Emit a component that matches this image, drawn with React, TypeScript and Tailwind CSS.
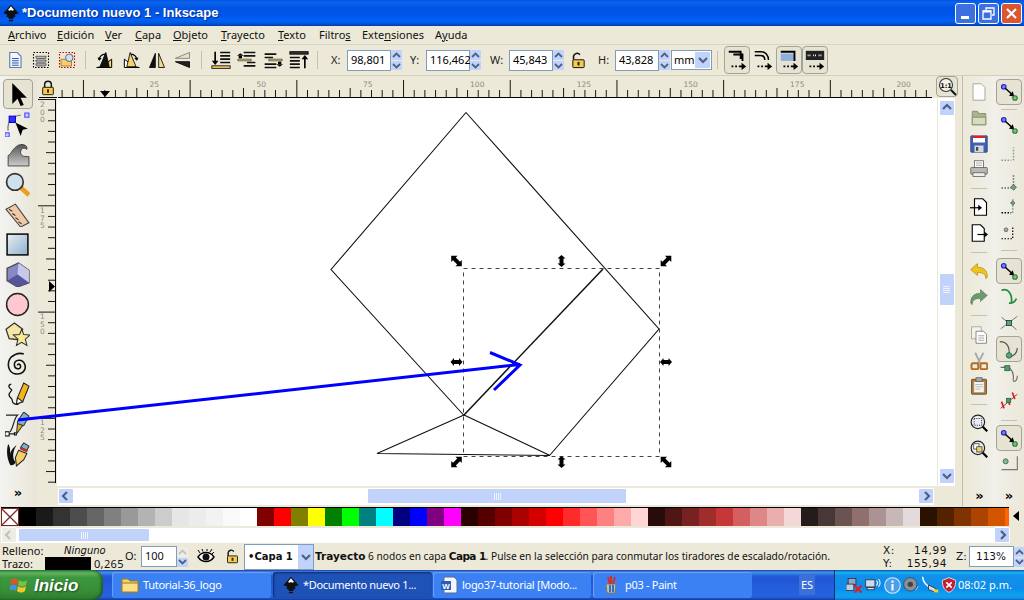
import React from 'react';

const PALETTE = [
  '#000000', '#1a1a1a', '#333333', '#4d4d4d', '#666666', '#808080', '#999999', '#b3b3b3', '#cccccc', '#e6e6e6',
  '#ececec', '#f2f2f2', '#f9f9f9', '#ffffff', '#800000', '#ff0000', '#808000', '#ffff00', '#008000', '#00ff00',
  '#008080', '#00ffff', '#000080', '#0000ff', '#800080', '#ff00ff', '#2b0000', '#550000', '#800000', '#aa0000',
  '#d40000', '#ff0000', '#ff2a2a', '#ff5555', '#ff8080', '#ffaaaa', '#ffd5d5', '#280b0b', '#501616', '#782121',
  '#a02c2c', '#c83737', '#d35f5f', '#de8787', '#e9afaf', '#f4d7d7', '#241c1c', '#483737', '#6c5353', '#916f6f',
  '#ac9393', '#c8b7b7', '#e3dbdb', '#2b1100', '#552200', '#803300', '#aa4400', '#d45500',
];

const MENU: [string, string, string, number][] = [
  ['', 'A', 'rchivo', 49], ['', 'E', 'dición', 48], ['', 'V', 'er', 30], ['', 'C', 'apa', 38], ['', 'O', 'bjeto', 48],
  ['', 'T', 'rayecto', 57], ['', 'T', 'exto', 41], ['Filtro', 's', '', 43], ['Exte', 'n', 'siones', 73], ['A', 'y', 'uda', 40],
];

const Ico = ({ s = 24, children }: { s?: number; children: React.ReactNode }) => (
  <svg width={s} height={s} viewBox="0 0 24 24" className="shrink-0">{children}</svg>
);

const Chevron = ({ dir, c = '#4d6185' }: { dir: 'up' | 'down' | 'left' | 'right'; c?: string }) => {
  const d = { up: 'M3 8l4-4 4 4', down: 'M3 5l4 4 4-4', left: 'M8 3L4 7l4 4', right: 'M6 3l4 4-4 4' }[dir];
  return (
    <svg width="14" height="14" viewBox="0 0 14 14">
      <path d={d} fill="none" stroke={c} strokeWidth="2.2" />
    </svg>
  );
};

const ScrollBtn = ({ dir, off }: { dir: 'up' | 'down' | 'left' | 'right'; off?: boolean }) => (
  <div className={`w-[16px] h-[16px] shrink-0 flex items-center justify-center rounded-[2px] border border-white ${off ? 'bg-[#eeede5]' : 'bg-[#c1d3fb]'}`}>
    <Chevron dir={dir} c={off ? '#c4c3ba' : '#4d6185'} />
  </div>
);

const Grip = ({ v }: { v?: boolean }) => (
  <div className={`flex ${v ? 'flex-col' : ''} gap-[1px]`}>
    {[0, 1, 2, 3].map(i => (
      <div key={i} className={v ? 'w-[7px] h-[1px] bg-[#eef3ff]' : 'w-[1px] h-[7px] bg-[#eef3ff]'} />
    ))}
  </div>
);

const Spin = ({ off }: { off?: boolean }) => (
  <div className="w-[11px] h-[20px] flex flex-col gap-[1px] shrink-0">
    <div className={`h-[10px] flex items-center justify-center rounded-[1px] ${off ? 'bg-[#eeede5]' : 'bg-[#c1d3fb]'}`}>
      <svg width="9" height="6" viewBox="0 0 9 6"><path d="M1 5l3.5-3.5L8 5" fill="none" stroke={off ? '#c4c3ba' : '#4d6185'} strokeWidth="1.8" /></svg>
    </div>
    <div className="h-[9px] flex items-center justify-center rounded-[1px] bg-[#c1d3fb]">
      <svg width="9" height="6" viewBox="0 0 9 6"><path d="M1 1l3.5 3.5L8 1" fill="none" stroke="#4d6185" strokeWidth="1.8" /></svg>
    </div>
  </div>
);

const NumField = ({ label, value, labelW, inputW = 44, gapL = 0 }: { label: string; value: string; labelW: number; inputW?: number; gapL?: number }) => (
  <div className="flex items-center shrink-0" style={{ marginLeft: gapL }}>
    <span className="text-[11px] text-[#222]" style={{ width: labelW }}>{label}</span>
    <div className="h-[21px] border border-[#7f9db9] bg-white flex items-center justify-start pl-[3px] text-[11px] text-black" style={{ width: inputW }}>{value}</div>
    <Spin />
  </div>
);

const Sep = ({ ml, mr }: { ml: number; mr: number }) => (
  <div className="w-[1px] h-[18px] bg-[#c5c2a8] shrink-0" style={{ marginLeft: ml, marginRight: mr }} />
);

const HSep = ({ h = 12 }: { h?: number }) => (
  <div className="flex items-center justify-center shrink-0" style={{ height: h }}><div className="w-[16px] h-[1px] bg-[#c5c2a8]" /></div>
);

const Pressed = ({ w, h, children }: { w: number; h: number; children: React.ReactNode }) => (
  <div className="flex items-center justify-center rounded-[4px] border border-[#a5a397] bg-[#e6e3d3] shrink-0" style={{ width: w, height: h }}>{children}</div>
);

// toolbar icons
const IcoPage = () => (
  <Ico s={18}>
    <path d="M5 2h10l5 5v15H5z" fill="#f4f7ff" stroke="#5d7fb0" strokeWidth="1.5" />
    <path d="M8 10h9M8 13h9M8 16h9M8 19h9" stroke="#2b5da8" strokeWidth="1.6" />
  </Ico>
);
const IcoSelectAll = () => (
  <Ico s={18}>
    <rect x="2" y="2" width="20" height="20" fill="none" stroke="#000" strokeWidth="1.5" strokeDasharray="2 2" />
    <path d="M5 7h14l-1 3H6zM5 12h14l-1 3H6zM5 17h14l-1 3H6z" fill="#bbb" stroke="#444" strokeWidth="1" />
  </Ico>
);
const IcoSelectLayer = () => (
  <Ico s={18}>
    <rect x="2" y="2" width="20" height="20" fill="none" stroke="#c00" strokeWidth="1.5" strokeDasharray="2 2" />
    <path d="M4 11h7l1 2h6v7H4z" fill="#f5cf6a" stroke="#8a6a20" strokeWidth="1" />
    <circle cx="15" cy="9" r="5" fill="#cfe0ef" stroke="#667" strokeWidth="1.3" />
  </Ico>
);
const IcoRot = ({ flip }: { flip?: boolean }) => (
  <Ico s={20}>
    <g transform={flip ? 'translate(24 0) scale(-1 1)' : undefined}>
      <path d="M2 21l6-1 12-9v10H2z" fill={flip ? '#fff' : '#f5d26c'} stroke="#000" strokeWidth="1.2" />
      <path d="M13 3L6 20h11z" fill={flip ? '#f5d26c' : '#111'} stroke="#000" />
      <path d="M5 12a7 7 0 0 1 7-7" fill="none" stroke="#000" strokeWidth="1.6" />
      <path d="M3 9l2 4 3-3z" fill="#000" />
    </g>
  </Ico>
);
const IcoFlipH = () => (
  <Ico s={20}>
    <path d="M10 4L3 21h7z" fill="#111" stroke="#000" />
    <path d="M14 4l7 17h-7z" fill="#f5d98a" stroke="#000" />
  </Ico>
);
const IcoFlipV = () => (
  <Ico s={20}>
    <path d="M21 3L4 10h17z" fill="#e8e3c8" stroke="#777" />
    <path d="M21 14L4 14l17 7z" fill="#222" stroke="#000" />
  </Ico>
);
const IcoOrder = ({ up, ends }: { up?: boolean; ends?: boolean }) => (
  <Ico s={20}>
    <g transform={up ? 'translate(24 24) rotate(180)' : undefined}>
      {ends ? (
        <>
          <path d="M11 3h12M11 7h12M11 11h12M11 15h12" stroke="#111" strokeWidth="2" />
          <path d="M5 2v13" stroke="#000" strokeWidth="2" />
          <path d="M1 13l4 5 4-5z" fill="#000" />
          <rect x="1" y="19" width="22" height="3" fill={up ? '#333' : '#f5cf6a'} stroke="#000" strokeWidth="1" />
        </>
      ) : (
        <>
          <path d="M8 3h14M8 7h14M12 15h10M8 19h14" stroke="#111" strokeWidth="2" />
          <path d="M1 11h16v2H1z" fill="#f5cf6a" stroke="#333" strokeWidth=".8" />
          <path d="M2 7h4v3H2z" fill="#000" />
          <path d="M0 7l4-3 4 3z" fill="#000" />
        </>
      )}
    </g>
  </Ico>
);
const IcoLock = ({ open, s = 16 }: { open?: boolean; s?: number }) => (
  <Ico s={s}>
    <path d={open ? 'M5 11V6a5 5 0 0 1 9-2' : 'M7 11V7a5 5 0 0 1 10 0v4'} fill="none" stroke="#111" strokeWidth="2.2" />
    <rect x="4" y="11" width="16" height="11" rx="1" fill="#f6cb52" stroke="#111" strokeWidth="1.4" />
    <rect x="10.5" y="14" width="3" height="5" fill="#3b2b05" />
  </Ico>
);
const IcoObj = ({ kind }: { kind: 0 | 1 | 2 | 3 }) => (
  <Ico s={22}>
    {kind === 0 && <path d="M3 3h13v3h2v7M8 6h8v5" fill="none" stroke="#000" strokeWidth="2" />}
    {kind === 1 && <path d="M3 3h7c5 0 8 4 8 9M3 7h6c3 0 5 2 5 5" fill="none" stroke="#000" strokeWidth="1.6" />}
    {kind === 2 && (
      <>
        <rect x="3" y="5" width="15" height="8" fill="#8fb0d8" />
        <path d="M3 3h15v10" fill="none" stroke="#000" strokeWidth="2" />
      </>
    )}
    {kind === 3 && (
      <>
        <rect x="2" y="2" width="20" height="10" fill="#222" />
        <path d="M4 7h4M10 7h4M16 7h4" stroke="#fff" strokeWidth="2" strokeDasharray="1 1" />
      </>
    )}
    <path d="M6 19h2M10 19h2M14 19h4" stroke="#000" strokeWidth="1.8" />
    <path d="M17 15l5 4-5 4z" fill="#000" />
  </Ico>
);

// snap
const Snap = ({ s = 18 }: { s?: number }) => (
  <Ico s={s}>
    <circle cx="5" cy="5" r="3" fill="#7a7df0" stroke="#2222cc" strokeWidth="1.6" />
    <path d="M7 7l10 9" stroke="#000" strokeWidth="2" />
    <path d="M17 11l2 7-7-1z" fill="#000" />
    <circle cx="20" cy="20" r="3" fill="#7ec27e" stroke="#2c7a3c" strokeWidth="1.6" />
  </Ico>
);
const SnapDots = ({ k }: { k: 0 | 1 | 2 | 3 }) => (
  <Ico s={18}>
    {k === 0 && <path d="M2 19h13M18 19V2" fill="none" stroke="#7f9f7f" strokeWidth="2" strokeDasharray="2 2" />}
    {k === 1 && (
      <>
        <path d="M2 20h13M18 17V2" fill="none" stroke="#666" strokeWidth="2" strokeDasharray="2 2" />
        <path d="M18 15l4 4-4 4-4-4z" fill="#6f9f7f" stroke="#345" strokeWidth=".8" />
      </>
    )}
    {k === 2 && (
      <>
        <path d="M2 21h13" stroke="#000" strokeWidth="2" strokeDasharray="2 2" />
        <path d="M17 21V2" stroke="#689f78" strokeWidth="2" strokeDasharray="2 2" />
        <path d="M17 5l3 3-3 3-3-3z" fill="#6f9f7f" stroke="#345" strokeWidth=".8" />
      </>
    )}
    {k === 3 && (
      <>
        <path d="M2 21h15V4" fill="none" stroke="#000" strokeWidth="1.6" strokeDasharray="2 2" />
        <circle cx="8" cy="9" r="2.5" fill="#8fb79a" stroke="#555" />
      </>
    )}
  </Ico>
);
const SnapCurve = ({ k }: { k: 0 | 1 | 2 | 3 | 4 | 5 }) => (
  <Ico s={k === 2 ? 22 : 20}>
    {k === 0 && (
      <>
        <path d="M3 4c8-3 13 4 12 15" fill="none" stroke="#1c8a3a" strokeWidth="2" />
        <path d="M12 19c4 1 7-1 9-5" fill="none" stroke="#1c8a3a" strokeWidth="2" />
      </>
    )}
    {k === 1 && (
      <>
        <path d="M2 19L22 4M3 5l18 15" fill="none" stroke="#777" strokeWidth="1.2" />
        <rect x="9" y="9" width="6" height="6" fill="#5aa86a" stroke="#235" strokeWidth="1" />
      </>
    )}
    {k === 2 && (
      <>
        <path d="M2 4c8 0 11 6 10 14M12 20c5 0 9-3 9-9" fill="none" stroke="#555" strokeWidth="1.3" />
        <circle cx="12" cy="19" r="3" fill="#5aa86a" stroke="#265" />
      </>
    )}
    {k === 3 && (
      <>
        <path d="M2 4h8c6 2 8 8 7 16M17 21c3 0 5-3 5-7" fill="none" stroke="#666" strokeWidth="1.3" />
        <rect x="7" y="2" width="6" height="6" fill="#4fa05f" stroke="#265" />
      </>
    )}
    {k === 4 && (
      <>
        <path d="M2 22L22 5" stroke="#b03030" strokeWidth="1.2" />
        <path d="M3 14l3 8M10 10l3 8M16 3l3 8" stroke="#d02020" strokeWidth="2" />
        <rect x="9" y="10" width="5" height="5" fill="#4fa05f" stroke="#265" />
      </>
    )}
    {k === 5 && (
      <>
        <path d="M22 4v16H3" fill="none" stroke="#777" strokeWidth="1.4" />
        <circle cx="8" cy="10" r="3" fill="#7ec27e" stroke="#456" />
      </>
    )}
  </Ico>
);

// command bar
const CmdIco = ({ k }: { k: string }) => (
  <Ico s={18}>
    {k === 'new' && <path d="M4 1h11l5 5v17H4z" fill="#fdfdfb" stroke="#a8a89c" strokeWidth="1.3" />}
    {k === 'open' && (
      <>
        <path d="M3 3h7l2 3h9v15H3z" fill="#a8b490" stroke="#78805f" />
        <path d="M3 11h18v10H3z" fill="#d6dcbd" stroke="#78805f" />
      </>
    )}
    {k === 'save' && (
      <>
        <rect x="1" y="1" width="22" height="22" rx="1" fill="#3f62b0" stroke="#1d3d80" />
        <rect x="4" y="1" width="16" height="9" fill="#fff" />
        <rect x="4" y="1" width="16" height="3" fill="#d22" />
        <rect x="6" y="14" width="12" height="9" fill="#d8d8d8" />
        <rect x="8" y="16" width="3" height="5" fill="#445" />
      </>
    )}
    {k === 'print' && (
      <>
        <rect x="6" y="1" width="12" height="10" fill="#fff" stroke="#555" />
        <path d="M8 4h8M8 7h8" stroke="#888" />
        <rect x="1" y="10" width="22" height="9" rx="1" fill="#b9b9ad" stroke="#555" />
        <rect x="4" y="17" width="16" height="5" fill="#eee" stroke="#555" />
      </>
    )}
    {k === 'import' && (
      <>
        <path d="M6 1h11l5 5v17H6z" fill="#fff" stroke="#000" strokeWidth="1.5" />
        <path d="M0 13h13" stroke="#000" strokeWidth="1.6" />
        <path d="M11 9l5 4-5 4z" fill="#000" />
      </>
    )}
    {k === 'export' && (
      <>
        <path d="M3 1h11l5 5v17H3z" fill="#fff" stroke="#000" strokeWidth="1.5" />
        <path d="M10 14h10" stroke="#000" strokeWidth="1.6" />
        <path d="M19 10l5 4-5 4z" fill="#000" />
      </>
    )}
    {k === 'undo' && <path d="M1 10l9-8v5c8 0 13 4 13 12 0 2-1 3-2 3 0-6-4-8-11-8v4z" fill="#efc420" stroke="#b38f10" />}
    {k === 'redo' && <path d="M23 10l-9-8v5C6 7 1 11 1 19c0 2 1 3 2 3 0-6 4-8 11-8v4z" fill="#6c9a70" stroke="#48704c" strokeDasharray="2 1" />}
    {k === 'copy' && (
      <>
        <path d="M2 1h13v16H2z" fill="#f3f3ee" stroke="#9a9a90" />
        <path d="M8 7h10l4 4v12H8z" fill="#fff" stroke="#666" />
        <path d="M11 13h8M11 16h8M11 19h8" stroke="#888" />
      </>
    )}
    {k === 'cut' && (
      <>
        <path d="M7 1l7 15M18 1l-8 15" stroke="#a8a8a8" strokeWidth="2.4" />
        <rect x="2" y="15" width="9" height="8" rx="2" fill="none" stroke="#b56a1c" strokeWidth="2.6" />
        <rect x="14" y="15" width="9" height="8" rx="2" fill="none" stroke="#b56a1c" strokeWidth="2.6" />
      </>
    )}
    {k === 'paste' && (
      <>
        <rect x="2" y="3" width="20" height="20" rx="1" fill="#b5752a" stroke="#5c3a10" />
        <rect x="5" y="6" width="14" height="15" fill="#f4f4ee" stroke="#888" />
        <rect x="8" y="1" width="8" height="5" fill="#aaa" stroke="#555" />
        <path d="M7 10h10M7 13h10M7 16h7" stroke="#aaa" />
      </>
    )}
    {k === 'zsel' && (
      <>
        <circle cx="10.5" cy="10.5" r="9" fill="#e8eef4" stroke="#222" strokeWidth="1.6" />
        <rect x="5.5" y="6" width="10" height="9" fill="none" stroke="#333" strokeWidth="1.3" strokeDasharray="1.5 1.5" />
        <path d="M17 17l6 6" stroke="#000" strokeWidth="3" />
      </>
    )}
    {k === 'zdraw' && (
      <>
        <circle cx="10.5" cy="10.5" r="9" fill="#e8eef4" stroke="#222" strokeWidth="1.6" />
        <rect x="5" y="5" width="7" height="7" fill="#fff" stroke="#333" />
        <rect x="9" y="9" width="7" height="7" fill="#f5cf6a" stroke="#333" />
        <path d="M17 17l6 6" stroke="#000" strokeWidth="3" />
      </>
    )}
  </Ico>
);

const Chevrons = () => <span className="text-[13px] font-bold leading-none font-['DejaVu_Sans',sans-serif] text-black tracking-[-1px]">»</span>;

const ToolIco = ({ k }: { k: string }) => (
  <Ico s={25}>
    {k === 'select' && <path d="M7 1v20l5-5 3 7 3-1-3-7h6z" fill="#000" />}
    {k === 'node' && (
      <>
        <path d="M3 18c-1-8 3-14 12-15" fill="none" stroke="#777" strokeWidth="1.2" />
        <rect x="4" y="4" width="6" height="6" fill="#3232ff" stroke="#00c" />
        <rect x="19" y="1" width="4" height="4" fill="#ccf" stroke="#44f" />
        <rect x="0" y="20" width="4" height="4" fill="#ccf" stroke="#44f" />
        <path d="M10 10l5 13 2-6 5-1z" fill="#000" />
      </>
    )}
    {k === 'tweak' && (
      <>
        <defs>
          <linearGradient id="tw" x1="0" y1="0" x2="0" y2="1">
            <stop offset="0" stopColor="#555" />
            <stop offset="1" stopColor="#ccc" />
          </linearGradient>
        </defs>
        <path d="M3 23V13C6 12 7 6 13 3c5-2 9 1 8 4-3-2-6-1-6 3s4 4 8 4v9z" fill="url(#tw)" stroke="#333" strokeWidth=".8" />
      </>
    )}
    {k === 'zoom' && (
      <>
        <path d="M14 14l9 8" stroke="#e8a020" strokeWidth="4.4" />
        <circle cx="9.5" cy="9.5" r="8" fill="#cfe0ee" stroke="#333" strokeWidth="1.6" />
      </>
    )}
    {k === 'ruler' && (
      <>
        <path d="M1 7l9-5 13 18-8 4z" fill="#f3c8a8" stroke="#444" />
        <path d="M4 7l3 2M7 11l3 2M10 15l3 2M13 19l3 2" stroke="#333" strokeWidth="1" />
      </>
    )}
    {k === 'rect' && (
      <>
        <defs>
          <linearGradient id="rc" x1="0" y1="0" x2="1" y2="1">
            <stop offset="0" stopColor="#e6eef6" />
            <stop offset="1" stopColor="#8fb0cc" />
          </linearGradient>
        </defs>
        <rect x="2" y="2" width="20" height="20" fill="url(#rc)" stroke="#000" strokeWidth="1.4" />
      </>
    )}
    {k === 'box' && (
      <>
        <path d="M2 6l11-5 10 7v12l-11 4L2 18z" fill="#8888c4" stroke="#444" strokeWidth="1.2" />
        <path d="M13 1l-1 11 11 8V8z" fill="#c8c8ec" />
        <path d="M12 12l-10 6 10 6 11-4z" fill="#55559a" />
      </>
    )}
    {k === 'circle' && <circle cx="12" cy="12" r="10.5" fill="#ffc8d0" stroke="#222" strokeWidth="1.4" />}
    {k === 'star' && (
      <>
        <path d="M9 1l8 6-4 10-9-1-3-9z" fill="#f6e6a6" stroke="#333" strokeWidth="1.2" />
        <path d="M16 7l2 5 6 .5-4.500 4 1.500 6-5-3-5 3 1.500-6-4.500-4 6-.5z" fill="#f8ea92" stroke="#333" strokeWidth="1" />
      </>
    )}
    {k === 'spiral' && <path d="M12 13c0-2 3-2 3 1s-6 3-6-2 8-6 10 0-3 10-9 9-8-8-6-13 9-8 14-6" fill="none" stroke="#111" strokeWidth="1.5" />}
    {k === 'pencil' && (
      <>
        <path d="M6 2C2 3 4 6 6 7S3 10 4 13s3 2 3 5 4 4 6 3" fill="none" stroke="#111" strokeWidth="1.2" />
        <path d="M18 1l5 3-6 15-6 2 1-6z" fill="#f2b51e" stroke="#222" />
        <path d="M12 15l5 4-6 2z" fill="#fff" stroke="#222" />
      </>
    )}
    {k === 'pen' && (
      <>
        <path d="M1 3h11C8 7 9 13 5 19" fill="none" stroke="#222" strokeWidth="1.2" />
        <rect x="0" y="19" width="4" height="4" fill="#fff" stroke="#000" />
        <path d="M4 21h5" stroke="#000" />
        <rect x="9" y="20" width="2" height="2" fill="#fff" stroke="#000" />
        <path d="M18 0l5 4-5 9-6 1 0-5z" fill="#7eb3cf" stroke="#333" />
        <path d="M12 11l5 2-6 8z" fill="#e8b02a" stroke="#333" />
      </>
    )}
    {k === 'callig' && (
      <>
        <path d="M3 2C1 9 2 16 5 22c3 1 5-1 5-3-3-3-3-10 1-16-3 2-6 6-6 9 0-4 0-8-2-10z" fill="#111" />
        <path d="M18 1l5 3-2 4-6-3z" fill="#7eb3cf" stroke="#333" />
        <path d="M15 5l7 3-1 2-7-3z" fill="#c03030" />
        <path d="M13 8l8 3-3 6-7 6-1-8z" fill="#f5cf6a" stroke="#222" />
      </>
    )}
  </Ico>
);

const TopRuler = () => {
  const ticks = Array.from({ length: 82 }, (_, i) => 62.1 + i * 10.67);
  const labels = [[148, '25'], [255, '50'], [361.6, '75'], [468.6, '100'], [575.3, '125'], [682, '150'], [788.6, '175'], [895, '200']] as const;
  return (
    <svg width="879" height="22" viewBox="58 76 879 22" className="block shrink-0">
      {ticks.map((x, i) => {
        const major = (i + 8) % 10 === 0;
        const mid = (i + 8) % 5 === 0;
        return x < 933 ? <line key={i} x1={x} x2={x} y1={major ? 80 : mid ? 88 : 90} y2={97} stroke="#000" strokeWidth="0.9" /> : null;
      })}
      <line x1="58" x2="932" y1="97.500" y2="97.500" stroke="#000" />
      {labels.map(([x, t]) => (
        <text key={t} x={x + 1.5} y={86.500} fontSize="7.500" fill="#8b8b82" fontFamily="DejaVu Sans">{t}</text>
      ))}
      <path d="M100 91h10l-5 6z" fill="#000" />
    </svg>
  );
};

const SideRuler = () => {
  const ticks = Array.from({ length: 37 }, (_, i) => 99.5 + i * 10.63);
  const labels = [[100, '200'], [206, '175'], [312, '150'], [418, '125']] as const;
  return (
    <svg width="20" height="388" viewBox="37 98 20 388" className="block shrink-0">
      <line x1="55.500" x2="55.500" y1="99" y2="483" stroke="#000" />
      {ticks.map((y, i) => (
        <line key={i} x1={i % 10 === 0 ? 38 : i % 5 === 0 ? 46 : 48} x2="55" y1={y} y2={y} stroke="#000" strokeWidth="0.9" />
      ))}
      {labels.map(([y, t]) =>
        t.split('').map((c, j) => (
          <text key={t + j} x="40" y={y + 7 + j * 7.5} fontSize="7.500" fill="#8b8b82" fontFamily="DejaVu Sans">{c}</text>
        ))
      )}
      <path d="M49 281v11l6-5.500z" fill="#000" />
    </svg>
  );
};

// selection handle arrows, drawn pointing along +x then rotated
const Handle = ({ x, y, a }: { x: number; y: number; a: number }) => (
  <path
    transform={`translate(${x} ${y}) rotate(${a})`}
    d={a % 90 === 0 ? 'M-6 0l3.500-4V-2h5V-4L6 0 2.500 4V2h-5V4z' : 'M-7.500 0l4.500-4.500V-2h6V-4.500L7.500 0 3 4.500V2h-6V4.500z'}
    fill="#000"
  />
);

const Canvas = () => (
  <svg width="880" height="388" viewBox="57 98 880 388" className="block shrink-0 bg-white">
    <g fill="none" stroke="#111" strokeWidth="1.1">
      <path d="M466 112.500L331 269.500 464 415.500" />
      <path d="M466 112.500L659 329 550 455" />
      <path d="M464 415L377 453.500 550 455.500 464 415" />
      <path d="M464 415L603 269" strokeWidth="1.500" />
    </g>
    <rect x="463.500" y="268.500" width="196" height="188" fill="none" stroke="#444" strokeDasharray="4 4" />
    <Handle x={456.500} y={261} a={45} />
    <Handle x={561.500} y={261} a={90} />
    <Handle x={666} y={261} a={-45} />
    <Handle x={456.500} y={362} a={0} />
    <Handle x={666} y={362} a={0} />
    <Handle x={456.500} y={462} a={-45} />
    <Handle x={561.500} y={462} a={90} />
    <Handle x={666} y={462} a={45} />
  </svg>
);

const TaskBtn = ({ active, w, mr, children }: { active?: boolean; w: number; mr: number; children: React.ReactNode }) => (
  <div
    className={`h-[26px] flex items-center rounded-[3px] text-white text-[11px] tracking-[-0.3px] font-['Noto_Sans',sans-serif] shrink-0 ${active ? 'bg-[#1e52b7] shadow-[inset_1px_1px_2px_rgba(0,0,40,0.5)]' : 'bg-[#3c81f3] shadow-[inset_1px_1px_1px_rgba(255,255,255,0.25)]'}`}
    style={{ width: w, marginRight: mr }}
  >
    {children}
  </div>
);

const TrayIcons = () => (
  <div className="flex items-center gap-[2px] w-[112px] shrink-0">
    <Ico s={17}>
      <rect x="3" y="2" width="11" height="9" fill="#8fa5c5" stroke="#223" />
      <rect x="0" y="10" width="11" height="9" fill="#c0cce0" stroke="#223" />
      <path d="M12 12l10 10M22 12L12 22" stroke="#e02020" strokeWidth="3" />
    </Ico>
    <Ico s={17}>
      <rect x="1" y="4" width="13" height="10" fill="#cdd9ec" stroke="#223" />
      <rect x="3" y="15" width="10" height="3" fill="#ddd" stroke="#223" />
      <path d="M16 5c2 2 2 5 0 7M19 3c3 3 3 8 0 11" fill="none" stroke="#e6f2ff" strokeWidth="1.6" />
    </Ico>
    <Ico s={17}>
      <circle cx="12" cy="12" r="11" fill="#4a9fe8" stroke="#d8ecff" strokeWidth="1.5" />
      <rect x="10.500" y="5" width="3" height="3" fill="#fff" />
      <rect x="10.500" y="10" width="3" height="9" fill="#fff" />
    </Ico>
    <Ico s={16}>
      <circle cx="11" cy="11" r="10" fill="#8a8f98" stroke="#333" />
      <circle cx="11" cy="11" r="4" fill="#444" />
      <path d="M19 20l4-6" stroke="#9fd0ff" strokeWidth="1.5" />
    </Ico>
    <Ico s={18}>
      <path d="M2 1c1 8 5 12 12 15" fill="none" stroke="#fff" strokeWidth="2" />
      <path d="M10 12l10 5v5l-10-4z" fill="#ddd" stroke="#223" />
      <rect x="17" y="18" width="6" height="4" fill="#e6d430" />
    </Ico>
    <Ico s={16}>
      <path d="M12 1l10 4c0 10-3 15-10 18C5 20 2 15 2 5z" fill="#c02030" stroke="#f0e0e0" strokeWidth="1.4" />
      <path d="M8 8l8 8M16 8l-8 8" stroke="#fff" strokeWidth="2.4" />
    </Ico>
  </div>
);

const InkLogo = ({ s = 18 }: { s?: number }) => (
  <Ico s={s}>
    <path d="M12 1L2 12c2 2 4 1 5 2l-1 3c3 0 3 2 3 3h6c0-2 1-3 3-3l-1-3c2-1 3 0 5-2z" fill="#111" />
    <path d="M12 3L8 8l2 1 2-1 2 1 2-1z" fill="#fff" />
    <rect x="9" y="21" width="6" height="2" rx="1" fill="#111" />
  </Ico>
);

const App: React.FC = () => {
  return (
    <div className="relative w-[1024px] h-[600px] overflow-hidden flex flex-col bg-[#ece9d8] font-['Noto_Sans',sans-serif] text-black">
      {/* Title bar */}
      <div className="h-[26px] shrink-0 flex items-center pl-[2px] pr-[2px] bg-[linear-gradient(180deg,#0054e3_0%,#0a62ee_8%,#0a5fe8_14%,#0054e3_30%,#0055eb_58%,#005bf5_70%,#0062f4_80%,#0052d6_92%,#003ca8_100%)]">
        <InkLogo s={18} />
        <span className="ml-[2px] text-white text-[13px] font-bold font-['Liberation_Sans',sans-serif] [text-shadow:1px_1px_1px_#0a2f90]">*Documento nuevo 1 - Inkscape</span>
        <div className="ml-auto flex gap-[2px]">
          <div className="w-[21px] h-[21px] rounded-[3px] border border-white bg-[#3c6fe0] flex items-end pl-[5px] pb-[4px]">
            <div className="w-[8px] h-[3px] bg-white" />
          </div>
          <div className="w-[21px] h-[21px] rounded-[3px] border border-white bg-[#3c6fe0] flex items-center justify-center">
            <svg width="13" height="13" viewBox="0 0 13 13"><path d="M4 3V1h8v7h-2M1 4h8v8H1z" fill="none" stroke="#fff" strokeWidth="1.3" /><path d="M1 4.500h8" stroke="#fff" strokeWidth="2" /></svg>
          </div>
          <div className="w-[21px] h-[21px] rounded-[3px] border border-white bg-[#da5530] flex items-center justify-center">
            <svg width="13" height="13" viewBox="0 0 13 13"><path d="M2 2l9 9M11 2l-9 9" stroke="#fff" strokeWidth="2.2" /></svg>
          </div>
        </div>
      </div>

      {/* Menu */}
      <div className="h-[18px] shrink-0 flex items-center pl-[8px] text-[11px] text-[#111]">
        {MENU.map(([a, u, b, w], i) => (
          <span key={i} className="shrink-0" style={{ width: w }}>{a}<u>{u}</u>{b}</span>
        ))}
      </div>

      {/* Command toolbar */}
      <div className="h-[32px] shrink-0 flex items-center pl-[6px] border-t border-t-[#d8d5c2] border-b border-b-[#d3d0bc]">
        <div className="w-[26px] shrink-0"><IcoPage /></div>
        <div className="w-[26px] shrink-0"><IcoSelectAll /></div>
        <div className="w-[26px] shrink-0"><IcoSelectLayer /></div>
        <Sep ml={1} mr={9} />
        <div className="w-[26px] shrink-0"><IcoRot /></div>
        <div className="w-[26px] shrink-0"><IcoRot flip /></div>
        <div className="w-[25px] shrink-0"><IcoFlipH /></div>
        <div className="w-[29px] shrink-0"><IcoFlipV /></div>
        <Sep ml={0} mr={9} />
        <div className="w-[26px] shrink-0"><IcoOrder ends /></div>
        <div className="w-[26px] shrink-0"><IcoOrder /></div>
        <div className="w-[26px] shrink-0"><IcoOrder up /></div>
        <div className="w-[28px] shrink-0"><IcoOrder up ends /></div>
        <Sep ml={0} mr={0} />
        <NumField label="X:" value="98,801" labelW={16} gapL={13} />
        <NumField label="Y:" value="116,462" labelW={16} gapL={8} />
        <NumField label="W:" value="45,843" labelW={19} gapL={9} />
        <div className="ml-[6px] w-[22px] shrink-0"><IcoLock open s={17} /></div>
        <NumField label="H:" value="43,828" labelW={17} gapL={6} />
        <div className="ml-[1px] w-[41px] h-[20px] border border-[#7f9db9] bg-white flex items-center pl-[2px] text-[11px] justify-between pr-[1px] shrink-0">
          mm
          <div className="w-[15px] h-[16px] rounded-[1px] bg-[#c1d3fb] flex items-center justify-center"><Chevron dir="down" /></div>
        </div>
        <Sep ml={5} mr={6} />
        <Pressed w={26} h={28}><IcoObj kind={0} /></Pressed>
        <div className="w-[26px] flex justify-center shrink-0"><IcoObj kind={1} /></div>
        <Pressed w={26} h={28}><IcoObj kind={2} /></Pressed>
        <Pressed w={26} h={28}><IcoObj kind={3} /></Pressed>
      </div>

      {/* Main area */}
      <div className="h-[430px] shrink-0 flex">
        {/* Tools */}
        <div className="w-[37px] shrink-0 flex flex-col items-center pl-[2px] pr-[4px] pt-[3px] bg-[linear-gradient(90deg,#f3f3f0,#e9e6d8)]">
          <Pressed w={30} h={30}><ToolIco k="select" /></Pressed>
          {['node', 'tweak', 'zoom', 'ruler', 'rect', 'box', 'circle', 'star', 'spiral', 'pencil', 'pen', 'callig'].map(k => (
            <div key={k} className="h-[30px] w-[30px] flex items-center justify-center"><ToolIco k={k} /></div>
          ))}
          <div className="mt-[10px]"><Chevrons /></div>
        </div>

        {/* Center */}
        <div className="w-[925px] shrink-0 flex flex-col">
          <div className="h-[22px] flex">
            <div className="w-[21px] shrink-0 flex flex-col items-center justify-end">
              <IcoLock s={16} />
              <div className="w-[18px] h-[1px] mt-[1px] bg-black" />
            </div>
            <TopRuler />
            <div className="w-[22px] h-[21px] ml-[-1px] rounded-[4px] border border-[#a5a397] bg-[#e6e3d3] flex items-center justify-center shrink-0">
              <svg width="19" height="19" viewBox="0 0 19 19">
                <circle cx="8" cy="8" r="6.500" fill="#f2f1ea" stroke="#333" strokeWidth="1.100" />
                <text x="8" y="10.500" textAnchor="middle" fontSize="6.500" fontWeight="700" fontFamily="DejaVu Sans">1:1</text>
                <path d="M13 13l5 5" stroke="#111" strokeWidth="2" />
              </svg>
            </div>
          </div>
          <div className="h-[388px] flex">
            <SideRuler />
            <Canvas />
            <div className="w-[17px] ml-[1px] flex flex-col bg-white items-center pt-[2px] pb-[2px] relative">
              <ScrollBtn dir="up" />
              <div className="h-[157px]" />
              <div className="w-[16px] h-[33px] rounded-[2px] border border-white bg-[#c1d3fb] flex items-center justify-center"><Grip v /></div>
              <div className="flex-1" />
              <ScrollBtn dir="down" />
            </div>
          </div>
          <div className="h-[20px] flex items-center pl-[21px] pr-[28px]">
            <div className="w-[876px] h-[17px] flex items-center bg-white">
              <ScrollBtn dir="left" />
              <div className="w-[293px]" />
              <div className="w-[260px] h-[16px] rounded-[2px] border border-white bg-[#c1d3fb] flex items-center justify-center"><Grip /></div>
              <div className="flex-1" />
              <ScrollBtn dir="right" />
            </div>
          </div>
        </div>

        {/* Right bars */}
        <div className="w-[31px] shrink-0 flex flex-col items-center pl-[2px] border-l border-l-[#bdbba9] bg-[linear-gradient(90deg,#ece9d8,#f0efe8)] pt-[3px]">
          {['new', 'open', 'save', 'print'].map(k => <div key={k} className="h-[26px] flex items-center"><CmdIco k={k} /></div>)}
          <HSep />
          {['import', 'export'].map(k => <div key={k} className="h-[26px] flex items-center"><CmdIco k={k} /></div>)}
          <HSep />
          {['undo', 'redo'].map(k => <div key={k} className="h-[26px] flex items-center"><CmdIco k={k} /></div>)}
          <HSep />
          {['copy', 'cut', 'paste'].map(k => <div key={k} className="h-[26px] flex items-center"><CmdIco k={k} /></div>)}
          <HSep h={11} />
          {['zsel', 'zdraw'].map(k => <div key={k} className="h-[26px] flex items-center"><CmdIco k={k} /></div>)}
          <div className="mt-[20px]"><Chevrons /></div>
        </div>
        <div className="w-[31px] shrink-0 flex flex-col items-center bg-[linear-gradient(90deg,#f1f0ea,#ebe8da)] pt-[3px]">
          <Pressed w={26} h={26}><Snap /></Pressed>
          <HSep h={8} />
          <div className="h-[24px] flex items-center"><Snap /></div>
          <div className="h-[36px] flex items-center"><SnapDots k={0} /></div>
          <div className="h-[18px] flex items-center"><SnapDots k={1} /></div>
          <div className="h-[32px] flex items-center"><SnapDots k={2} /></div>
          <div className="h-[20px] flex items-center"><SnapDots k={3} /></div>
          <HSep h={16} />
          <Pressed w={26} h={26}><Snap /></Pressed>
          <div className="h-[26px] flex items-center"><SnapCurve k={0} /></div>
          <div className="h-[26px] flex items-center"><SnapCurve k={1} /></div>
          <Pressed w={26} h={26}><SnapCurve k={2} /></Pressed>
          <div className="h-[24px] flex items-center"><SnapCurve k={3} /></div>
          <div className="h-[30px] flex items-center"><SnapCurve k={4} /></div>
          <HSep h={10} />
          <Pressed w={26} h={26}><Snap /></Pressed>
          <div className="h-[24px] flex items-center"><SnapCurve k={5} /></div>
          <div className="mt-[7px]"><Chevrons /></div>
        </div>
      </div>

      {/* Palette */}
      <div className="h-[21px] shrink-0 flex items-start pt-[1px] pl-[1px]">
        <div className="w-[1008px] h-[19px] flex overflow-hidden border-t border-t-black bg-[#ff6600]">
          <svg width="18" height="18" viewBox="0 0 18 18" className="block shrink-0 bg-white">
            <path d="M0 0l18 18M18 0L0 18" stroke="#7a2a2a" strokeWidth="1.300" />
            <rect x=".5" y=".5" width="17" height="17" fill="none" stroke="#7a2a2a" />
          </svg>
          {PALETTE.map((c, i) => (
            <div key={i} className="w-[17px] shrink-0" style={{ background: c }} />
          ))}
        </div>
        <div className="ml-[3px] mt-[4px]">
          <svg width="8" height="10" viewBox="0 0 8 10"><path d="M7 0v10L1 5z" fill="#000" /></svg>
        </div>
      </div>

      {/* Palette scrollbar */}
      <div className="h-[16px] shrink-0 flex items-center pl-[1px] pr-[14px]">
        <div className="w-[1009px] h-[15px] flex items-center bg-white">
          <ScrollBtn dir="left" off />
          <div className="w-[132px] h-[14px] rounded-[2px] ml-[1px] border border-white bg-[#c1d3fb] flex items-center justify-center"><Grip /></div>
          <div className="flex-1" />
          <ScrollBtn dir="right" />
        </div>
      </div>

      {/* Status bar */}
      <div className="h-[27px] shrink-0 flex items-center font-['DejaVu_Sans',sans-serif] text-[10.500px] text-[#111]">
        <div className="w-[124px] shrink-0 pl-[2px] flex flex-col leading-[13px]">
          <div className="flex">
            <span className="w-[62px] font-['Noto_Sans',sans-serif] text-[11px]">Relleno:</span>
            <span className="italic text-[10px]">Ninguno</span>
          </div>
          <div className="flex items-center">
            <span className="w-[43px] font-['Noto_Sans',sans-serif] text-[11px]">Trazo:</span>
            <div className="w-[46px] h-[13px] bg-black" />
            <span className="ml-[3px] font-['Noto_Sans',sans-serif] text-[11px] tracking-[0.4px]">0,265</span>
          </div>
        </div>
        <span className="w-[16px] ml-[1px] shrink-0 font-['Noto_Sans',sans-serif] text-[11px]">O:</span>
        <div className="w-[36px] h-[21px] border border-[#7f9db9] bg-white flex items-center pl-[3px] shrink-0 font-['Noto_Sans',sans-serif] text-[11px]">100</div>
        <Spin off />
        <div className="w-[1px] h-[25px] ml-[3px] mr-[6px] bg-[#c8c5b2]" />
        <div className="w-[28px] shrink-0">
          <svg width="18" height="16" viewBox="0 0 18 16">
            <path d="M1 8c4-6 12-6 16 0-4 6-12 6-16 0z" fill="#fff" stroke="#000" strokeWidth="1.400" />
            <circle cx="9" cy="8" r="3.500" fill="#111" />
            <path d="M3 4L1 1M6 2.500L5 0M10 2V0M13 3l2-3M15 5l2-2" stroke="#000" />
          </svg>
        </div>
        <div className="w-[19px] shrink-0"><IcoLock open s={15} /></div>
        <div className="w-[70px] h-[26px] border border-[#7f9db9] bg-white flex items-center justify-between pl-[3px] shrink-0 font-bold text-[10px]">
          •Capa 1
          <div className="w-[15px] h-[24px] bg-[#c1d3fb] flex items-center justify-center"><Chevron dir="down" /></div>
        </div>
        <div className="w-[567px] ml-[1px] shrink-0 whitespace-nowrap overflow-hidden font-['Noto_Sans',sans-serif] text-[10.200px]">
          <b className="font-['DejaVu_Sans',sans-serif] text-[10.500px]">Trayecto</b> 6 nodos en capa <b className="font-['DejaVu_Sans',sans-serif] text-[10.500px] tracking-[-0.6px]">Capa 1</b>. Pulse en la selección para conmutar los tiradores de escalado/rotación.
        </div>
        <div className="w-[1px] h-[25px] bg-[#c8c5b2]" />
        <div className="w-[64px] ml-[1px] shrink-0 flex flex-col leading-[13px] tracking-[0.6px]">
          <div className="flex justify-between"><span>X:</span><span>14,99</span></div>
          <div className="flex justify-between"><span>Y:</span><span>155,94</span></div>
        </div>
        <span className="w-[12px] ml-[9px] shrink-0">Z:</span>
        <div className="w-[45px] ml-[1px] h-[21px] border border-[#7f9db9] bg-white flex items-center pl-[6px] shrink-0">113%</div>
        <Spin />
      </div>

      {/* Taskbar */}
      <div className="h-[30px] shrink-0 flex items-center bg-[linear-gradient(180deg,#1f2f86_0,#3165c4_3%,#3682e5_6%,#4490e6_10%,#3883e5_12%,#2b71e0_15%,#2663da_18%,#235bd6_20%,#2258d5_23%,#2157d6_38%,#245ddb_54%,#2562df_86%,#245fdc_89%,#2158d4_92%,#1d4ec0_95%,#1941a5_98%)]">
        <div className="w-[103px] h-[30px] shrink-0 mr-[9px] rounded-r-[10px] flex items-center pl-[10px] gap-[5px] bg-[linear-gradient(180deg,#2f8f3b_0%,#62b25f_10%,#3c983f_25%,#388e38_70%,#2d7a2f_100%)] shadow-[inset_-2px_0_3px_rgba(0,40,0,0.5)]">
          <svg width="19" height="19" viewBox="0 0 19 19">
            <path d="M1 4c3-2 5-2 7 0l-1 5C5 7 3 7 0 9z" fill="#e8502a" />
            <path d="M9 4c3 2 5 2 8 0l-1 5c-3 2-5 2-8 0z" fill="#79c043" />
            <path d="M0 10c3-2 5-2 7 0l-1 5c-2-2-4-2-7 0z" fill="#4b8fe0" />
            <path d="M8 10c3 2 5 2 8 0l-1 5c-3 2-5 2-8 0z" fill="#f4c62c" />
          </svg>
          <span className="text-white italic font-bold text-[17px] leading-none font-['Liberation_Sans',sans-serif] [text-shadow:1px_1px_2px_#1a4a1a]">Inicio</span>
        </div>
        <TaskBtn w={159} mr={2}>
          <div className="ml-[9px] mr-[4px]"><svg width="18" height="16" viewBox="0 0 18 16"><path d="M1 2h6l2 2h8v11H1z" fill="#f4d168" stroke="#a07a1c" /><path d="M1 6h16v9H1z" fill="#fbe08a" stroke="#a07a1c" /></svg></div>
          Tutorial-36_logo
        </TaskBtn>
        <TaskBtn active w={159} mr={1}>
          <div className="ml-[9px] mr-[3px]"><InkLogo s={18} /></div>
          *Documento nuevo 1...
        </TaskBtn>
        <TaskBtn w={158} mr={2}>
          <div className="ml-[8px] mr-[3px]"><svg width="18" height="18" viewBox="0 0 18 18"><path d="M3 1h10l3 3v13H3z" fill="#f4f6fb" stroke="#5a6a90" /><rect x="0" y="5" width="10" height="9" fill="#2b5eb0" /><text x="5" y="12.500" textAnchor="middle" fill="#fff" fontSize="8" fontWeight="700" fontFamily="Liberation Sans">W</text></svg></div>
          logo37-tutorial [Modo...
        </TaskBtn>
        <TaskBtn w={159} mr={0}>
          <div className="ml-[9px] mr-[5px]"><svg width="18" height="18" viewBox="0 0 18 18"><path d="M4 8h10l-1 9H5z" fill="#c8c0a8" stroke="#776" /><path d="M6 1l2 7M9 0v8M13 1l-2 7" stroke="#d03030" strokeWidth="2" /><path d="M8 9v7M11 9v7" stroke="#3070c0" strokeWidth="2" /></svg></div>
          p03 - Paint
        </TaskBtn>
        <div className="ml-[47px] w-[16px] h-[20px] text-center leading-[20px] bg-[#3a70d8] text-white text-[11px] shrink-0">ES</div>
        <div className="ml-[19px] h-[30px] flex-1 flex items-center pl-[11px] border-l border-l-[#10346e] bg-[linear-gradient(180deg,#0c59b9_1%,#139ee9_6%,#18b5f2_10%,#139beb_14%,#1290e8_19%,#0d8dea_63%,#0d9ff1_81%,#0f9eed_88%,#119be9_91%,#1392e2_94%,#137ed7_97%,#095bc9)]">
          <TrayIcons />
          <span className="text-white text-[11px]">08:02 p.m.</span>
        </div>
      </div>

      {/* Blue arrow drawn over the window */}
      <svg width="1024" height="600" viewBox="0 0 1024 600" className="absolute left-0 top-0 pointer-events-none">
        <path d="M18 420L520 364.500M490 352.500L520 365 494 390" fill="none" stroke="#0000ff" strokeWidth="3" />
      </svg>
    </div>
  );
};

export default App;
